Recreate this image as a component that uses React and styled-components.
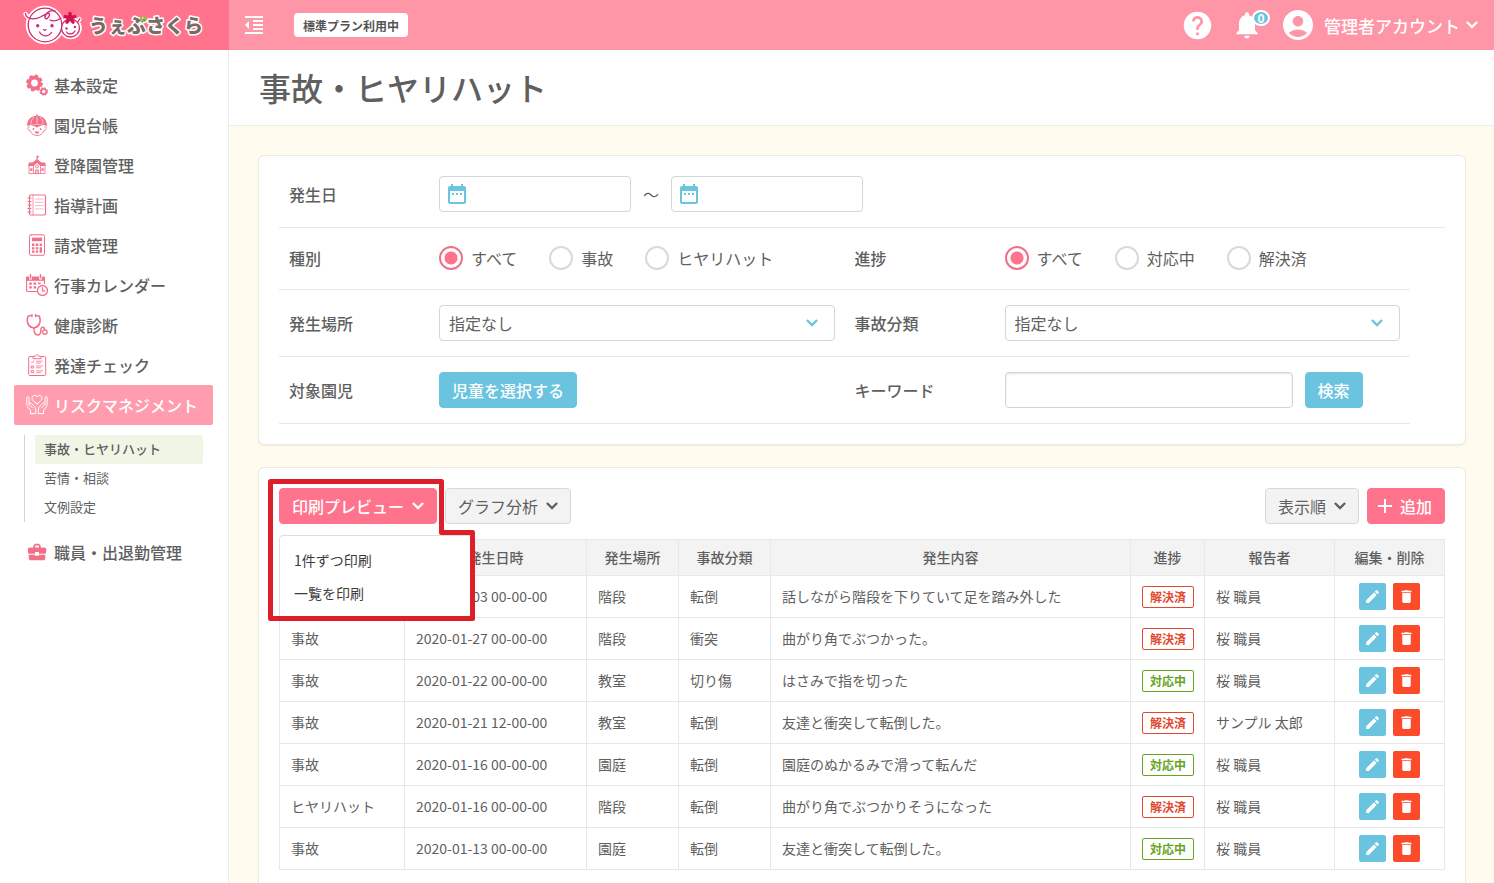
import React from 'react';
import styled, { createGlobalStyle, css } from 'styled-components';
import {
  MdHelp,
  MdNotifications,
  MdAccountCircle,
  MdFormatIndentDecrease,
  MdDateRange,
  MdEdit,
  MdDelete,
  MdAdd,
  MdBusinessCenter,
} from 'react-icons/md';

const color = {
  pink: '#ff738c',
  pinkLight: '#ff96a8',
  pinkActive: '#ff9dae',
  icon: '#f0708a',
  blue: '#6ac4df',
  red: '#fb4b2b',
  text: '#5f5f5f',
  line: '#e8e8e8',
  cream: '#fffbee',
};

const GlobalStyle = createGlobalStyle`
  *, *::before, *::after { box-sizing: border-box; }
  body {
    margin: 0;
    color: ${color.text};
    background: ${color.cream};
    font-family: "Noto Sans CJK JP", "Noto Sans", sans-serif;
    font-size: 16px;
    line-height: 24px;
  }
  button, input, select { font: inherit; color: inherit; margin: 0; }
  a { color: inherit; text-decoration: none; }
  ul { list-style: none; margin: 0; padding: 0; }
  svg { display: block; flex: none; }
`;

const Shell = styled.div`
  display: flex;
  height: 100vh;
`;

/* ---------- sidebar ---------- */

const Sidebar = styled.aside`
  flex: none;
  width: 229px;
  background: #fff;
  display: flex;
  flex-direction: column;
`;

const Brand = styled.a`
  height: 50px;
  padding-left: 22px;
  background: ${color.pink};
`;

const Nav = styled.nav`
  flex: 1;
  padding: 15px 15px 0 14px;
  border-right: 1px solid #ededed;
`;

const NavLink = styled.a`
  display: flex;
  align-items: center;
  gap: 6px;
  height: 40px;
  padding-left: 12px;
  border-radius: 2px;
  font-weight: 500;
  color: ${(p) => (p.$active ? '#fff' : color.text)};
  background: ${(p) => (p.$active ? color.pinkActive : 'transparent')};
  svg { color: ${(p) => (p.$active ? '#fff' : color.icon)}; }
`;

const SubMenu = styled.ul`
  margin: 10px;
  padding-left: 10px;
  border-left: 1px solid #d4d4d4;
`;

const SubLink = styled.a`
  display: block;
  height: 29px;
  padding-left: 9px;
  border-radius: 2px;
  font-size: 13px;
  line-height: 27px;
  font-weight: ${(p) => (p.$active ? 500 : 400)};
  background: ${(p) => (p.$active ? '#eff6e6' : 'transparent')};
`;

/* ---------- header ---------- */

const Main = styled.div`
  flex: 1;
  min-width: 0;
  display: flex;
  flex-direction: column;
`;

const TopBar = styled.header`
  flex: none;
  display: flex;
  align-items: center;
  justify-content: space-between;
  height: 50px;
  padding: 0 16px 0 13px;
  color: #fff;
  background: ${color.pinkLight};
`;

const TopGroup = styled.div`
  display: flex;
  align-items: center;
  gap: ${(p) => p.$gap}px;
`;

const PlainButton = styled.button`
  position: relative;
  display: flex;
  align-items: center;
  gap: 8px;
  padding: 0;
  border: 0;
  background: none;
  color: inherit;
  cursor: pointer;
`;

const AccountButton = styled(PlainButton)`
  gap: 6px;
  font-size: 17px;
  line-height: 26px;
  font-weight: 500;
`;

const AccountName = styled.span`
  padding: 2px 0 0 2px;
`;

const PlanTag = styled.span`
  height: 24px;
  padding: 1px 9px 0;
  border-radius: 4px;
  background: #fff;
  color: #555;
  font-size: 12px;
  font-weight: 700;
`;

const Count = styled.span`
  position: absolute;
  top: 1px;
  left: 21px;
  width: 18px;
  height: 16px;
  border: 2px solid #fff;
  border-radius: 50%;
  background: ${color.blue};
  font-size: 12px;
  font-weight: 700;
  line-height: 11px;
  text-align: center;
`;

const TitleBar = styled.div`
  flex: none;
  display: flex;
  align-items: center;
  height: 76px;
  padding: 0 30px 2px;
  background: #fff;
  border-bottom: 1px solid #ececec;
`;

const Title = styled.h1`
  margin: 0;
  font-size: 32px;
  line-height: 48px;
  font-weight: 500;
`;

const Content = styled.main`
  flex: 1;
  min-height: 0;
  overflow-y: auto;
  scrollbar-width: none;
  padding: 29px 28px 29px 29px;
`;

const Card = styled.section`
  padding: ${(p) => p.$top}px 20px 20px;
  border: 1px solid #ebe9e2;
  border-radius: 6px;
  background: #fff;
  box-shadow: 0 1px 2px rgba(0, 0, 0, 0.06);
  & + & { margin-top: 22px; }
`;

/* ---------- search form ---------- */

const FieldRow = styled.div`
  display: flex;
  width: ${(p) => (p.$full ? '100%' : '97%')};
  height: ${(p) => (p.$short ? 62 : 67)}px;
  padding-bottom: ${(p) => (p.$short ? 2 : 0)}px;
  border-bottom: 1px solid ${color.line};
`;

const Field = styled.div`
  flex: 1;
  display: flex;
  align-items: center;
  padding: 0 10px;
`;

const labelStyle = css`
  flex: none;
  width: 150px;
  font-weight: 500;
`;
const FieldLabel = styled.label`${labelStyle}`;
const FieldName = styled.span`${labelStyle}`;

const Controls = styled.div`
  flex: 1;
  display: flex;
  align-items: center;
  gap: ${(p) => p.$gap || 12}px;
`;

const boxStyle = css`
  height: 36px;
  border: 1px solid #d5d5d5;
  border-radius: 4px;
  background: #fff;
`;

const DateBox = styled.span`
  position: relative;
  svg {
    position: absolute;
    top: 6px;
    left: 6px;
    color: ${color.blue};
    pointer-events: none;
  }
`;

const DateInput = styled.input`
  ${boxStyle}
  display: block;
  width: 192px;
  padding: 0 8px 0 34px;
`;

const KeywordInput = styled.input`
  ${boxStyle}
  width: 288px;
  padding: 0 8px;
  box-shadow: inset 0 1px 2px rgba(0, 0, 0, 0.12);
`;

const SelectBox = styled.span`
  position: relative;
  flex: 1;
  svg {
    position: absolute;
    top: 14px;
    right: 17px;
    color: ${color.blue};
    pointer-events: none;
  }
`;

const Select = styled.select`
  ${boxStyle}
  display: block;
  width: 100%;
  padding: 0 9px;
  appearance: none;
`;

const RadioLabel = styled.label`
  display: flex;
  align-items: center;
  gap: 8px;
`;

const Radio = styled.input`
  appearance: none;
  width: 24px;
  height: 24px;
  border: 2px solid #d9d9d9;
  border-radius: 50%;
  background: #fff;
  &:checked {
    border-color: ${color.icon};
    background: radial-gradient(circle, ${color.pink} 6px, #fff 7px);
  }
`;

const tones = {
  blue: css`color: #fff; background: ${color.blue}; border-color: ${color.blue}; font-weight: 500;`,
  pink: css`color: #fff; background: ${color.pink}; border-color: ${color.pink}; font-weight: 500;`,
  gray: css`color: ${color.text}; background: #f3f3f3; border-color: #d8d8d8;`,
};

const Button = styled.button`
  display: inline-flex;
  align-items: center;
  gap: 8px;
  height: 36px;
  padding: 0 12px;
  border: 1px solid;
  border-radius: 4px;
  white-space: nowrap;
  cursor: pointer;
  ${(p) => tones[p.$tone]}
`;

const AddButton = styled(Button)`
  gap: 3px;
  padding: 0 12px 0 5px;
`;

/* ---------- list ---------- */

const Toolbar = styled.div`
  display: flex;
  justify-content: space-between;
  margin-bottom: 15px;
`;

const ToolGroup = styled.div`
  display: flex;
  gap: 8px;
`;

const MenuAnchor = styled.div`
  position: relative;
  z-index: 1;
`;

const Menu = styled.ul`
  && {
    position: absolute;
    top: 47px;
    left: 0;
    width: 194px;
    padding: 8px 0;
    border: 1px solid #dedede;
    border-radius: 4px;
    background: #fff;
  }
`;

const MenuItem = styled.button`
  display: block;
  width: 100%;
  height: 33px;
  padding: 0 14px 2px;
  border: 0;
  background: none;
  color: #3c3c3c;
  font-size: 14px;
  text-align: left;
  cursor: pointer;
`;

const Highlight = styled.svg`
  position: absolute;
  top: -9px;
  left: -11px;
  pointer-events: none;
`;

const Table = styled.table`
  width: 100%;
  table-layout: fixed;
  border-collapse: collapse;
  font-size: 14px;
  line-height: 20px;
`;

const Col = styled.col`
  width: ${(p) => (p.$w ? `${p.$w}px` : 'auto')};
`;

const Th = styled.th`
  height: 36px;
  padding: 0 0 2px;
  border: 1px solid ${color.line};
  background: #f3f3f3;
  font-weight: 500;
`;

const Td = styled.td`
  height: 42px;
  padding: ${(p) => (p.$control ? '0 11px' : '0 11px 2px')};
  border: 1px solid ${color.line};
  white-space: nowrap;
`;

const Status = styled.span`
  display: block;
  width: 52px;
  height: 22px;
  border: 1px solid;
  border-radius: 2px;
  color: ${(p) => (p.$done ? '#e2492f' : '#68a51e')};
  font-size: 12px;
  font-weight: 700;
  line-height: 20px;
  text-align: center;
`;

const Actions = styled.div`
  display: flex;
  justify-content: center;
  gap: 7px;
`;

const IconButton = styled.button`
  display: grid;
  place-items: center;
  width: 27px;
  height: 27px;
  padding: 0;
  border: 0;
  border-radius: 2px;
  color: #fff;
  background: ${(p) => p.$bg};
  cursor: pointer;
`;

/* ---------- drawings ---------- */

const Chevron = () => (
  <svg width="12" height="8" viewBox="0 0 12 8" fill="none" stroke="currentColor" strokeWidth="2.4" aria-hidden="true">
    <path d="M.9 1 6 6 11.100 1" />
  </svg>
);

const Glyph = ({ children }) => (
  <svg width="22" height="22" viewBox="0 0 22 22" fill="none" stroke="currentColor" strokeWidth="1" strokeLinecap="round" strokeLinejoin="round" aria-hidden="true">
    {children}
  </svg>
);

const Gears = () => (
  <Glyph>
    <circle cx="8.500" cy="9" r="5.300" strokeWidth="3.800" />
    <circle cx="8.500" cy="9" r="7.400" strokeWidth="2" strokeDasharray="3.600 2.210" strokeLinecap="butt" />
    <circle cx="17.700" cy="17.500" r="2.600" strokeWidth="1.800" />
    <circle cx="17.700" cy="17.500" r="3.700" strokeWidth="1.200" strokeDasharray="1.700 1.200" strokeLinecap="butt" />
  </Glyph>
);

const Child = () => (
  <Glyph>
    <path d="M1 12C1 5.800 5.200 1.800 11 1.800s10 4 10 10.200C18 10.800 14.600 10.400 11 10.400S4 10.800 1 12z" fill="currentColor" stroke="none" />
    <circle cx="11" cy="1.600" r="1" fill="currentColor" stroke="none" />
    <path d="M11 2.800V9.200M7.600 3.500C5.800 5.200 5 7.200 4.900 9.500M14.400 3.500C16.200 5.200 17 7.200 17.100 9.500" stroke="#fff" strokeWidth=".6" />
    <path d="M3.400 12.700c-2.200-.2-2.600 3.200.4 3.700C5 19.500 7.800 21.500 11 21.500s6-2 7.200-5.100c3-.5 2.600-3.900.4-3.700" strokeWidth=".9" />
    <path d="M5 11.500c4-1 8-1 12 0l-4.500.9-1.500 1.400-1.500-1.400z" fill="currentColor" stroke="none" />
    <circle cx="7.400" cy="15" r=".9" fill="currentColor" stroke="none" />
    <circle cx="14.600" cy="15" r=".9" fill="currentColor" stroke="none" />
    <path d="M8.600 17.500h4.800c-.4 1.700-1.300 2.200-2.400 2.200s-2-.5-2.400-2.200z" fill="currentColor" stroke="none" />
  </Glyph>
);

const School = () => (
  <Glyph>
    <path d="M11 7V2" />
    <path d="M11 1.500l2.600 1.200L11 4z" fill="currentColor" stroke="none" />
    <path d="M11 5 6.500 8.500H3L2 12h5.500L11 9.100l3.500 2.900H20l-1-3.500h-3.500z" fill="currentColor" stroke="none" />
    <path d="M3 12v7.500h16V12M7.500 12v7.500M14.500 12v7.500" strokeWidth=".8" />
    <circle cx="11" cy="12.500" r="1.500" strokeWidth=".9" />
    <path d="M4.300 14.500h2v2.200h-2zM15.700 14.500h2v2.200h-2z" fill="currentColor" strokeWidth=".3" />
    <path d="M9.500 19.500V16h3v3.500M11 16v3.500" strokeWidth=".8" />
  </Glyph>
);

const Notebook = () => (
  <Glyph>
    <rect x="3.500" y="1" width="16" height="20" rx="1.500" strokeWidth="1.200" />
    <path d="M7 1v20" strokeWidth=".7" />
    <path d="M2 4h3M2 7.500h3M2 11h3M2 14.500h3M2 18h3" strokeWidth="1.200" />
    <path d="M9.500 5h7.500M9.500 8.300h7.500M9.500 11.600h7.500M9.500 14.900h7.500" strokeWidth=".5" />
  </Glyph>
);

const Calculator = () => (
  <Glyph>
    <rect x="3.500" y=".8" width="15" height="20.500" rx="1.500" />
    <path d="M6 3.600h10v3.600H6z" fill="currentColor" stroke="none" />
    <path d="M6 9.600h2.400V12H6zM9.800 9.600h2.400V12H9.800zM13.600 9.600H16V12h-2.400zM6 13.200h2.400v2.300H6zM9.800 13.200h2.400v2.300H9.800zM13.600 13.200H16v5.500h-2.400zM6 16.600h2.400v2.100H6zM9.800 16.600h2.400v2.100H9.800z" fill="currentColor" stroke="none" />
  </Glyph>
);

const CalendarClock = () => (
  <Glyph>
    <path d="M10.500 17.500H1.800A1.200 1.200 0 0 1 .6 16.300V3.500h17.800v6" strokeWidth="1.100" />
    <path d="M.3 2.500h18.200v4.300H.3z" fill="currentColor" stroke="none" />
    <path d="M4.500.3v4M14.500.3v4" stroke="#fff" strokeWidth="3" />
    <path d="M4.500.8V4M14.500.8V4" strokeWidth="1.500" />
    <path d="M3.200 8.500h2.600v2.300H3.200zM7.600 8.500h2.600v2.300H7.600zM12 8.500h2.600v1.700H12zM3.200 12.300h2.600v2.300H3.200zM7.600 12.300h2.600v2.300H7.600z" fill="currentColor" stroke="none" />
    <circle cx="16.500" cy="16.500" r="5" fill="#fff" strokeWidth="1.300" />
    <path d="M16.500 13.600v3.200h2.400" strokeWidth="1.200" />
  </Glyph>
);

const Stethoscope = () => (
  <Glyph>
    <path d="M5.500 1.500 2.200 2C.4 6 1.200 12 6.200 13.600c1 .4 2 .4 3 0C14.200 12 15 6 13.200 2l-3.300-.5" strokeWidth="1.600" />
    <path d="M6 .5v2.200M9.500.5v2.200" strokeWidth="1.300" />
    <path d="M8 14c-.2 4.500 1.200 7 3.500 7s3.300-1.700 3.300-4 .5-3.800 2-3.800 1.700 1.500 1.900 2.600" strokeWidth="1.500" />
    <circle cx="18.900" cy="18" r="2.200" strokeWidth="1.300" />
  </Glyph>
);

const Clipboard = () => (
  <Glyph>
    <rect x="2.700" y="2.500" width="17" height="19" rx="1" />
    <path d="M7 4.300V2.300h2.500C9.800.3 12.400.3 12.700 2.300h2.500v2z" fill="#fff" />
    <path d="M5.500 8.200l.8.800 1.600-2M5.500 12h2.200v2H5.500zM5.500 16.600h2.200v2H5.500z" strokeWidth=".9" />
    <path d="M10.500 7.200h6M10.500 9h4M10.500 12h6M10.500 13.800h4M10.500 16.800h6M10.500 18.600h4" strokeWidth=".8" />
  </Glyph>
);

const HeartHands = () => (
  <Glyph>
    <path d="M11 9.800C7.500 7.600 6 5.800 6 3.900 6 1.200 9.700.4 11 3c1.300-2.600 5-1.800 5 .9 0 1.900-1.500 3.700-5 5.900z" />
    <path d="M4.500 19.600v-3L1.300 12.400C.8 11 .7 6 .7 3.500c0-1.300 2-1.300 2.100 0l.3 6.300M3.300 10.500l3.200 3.400M3.300 10.500c-.3-1.700 1.300-2 2.300-1l3 3c1 1.200 1.200 3 1.200 7.100H4.500" />
    <path d="M17.500 19.600v-3l3.200-4.200c.5-1.400.6-6.400.6-8.900 0-1.300-2-1.300-2.100 0l-.3 6.300M18.700 10.500l-3.200 3.400M18.700 10.500c.3-1.700-1.300-2-2.300-1l-3 3c-1 1.200-1.200 3-1.200 7.100h5.300" />
  </Glyph>
);

const Case = () => <MdBusinessCenter size={22} aria-hidden="true" />;

const Logo = () => (
  <svg width="190" height="50" viewBox="22 0 190 50" role="img" aria-label="うぇぶさくら">
    <g fill="none" strokeLinecap="round" strokeLinejoin="round">
      <g stroke="#fff" strokeWidth="4.500">
        <circle cx="45" cy="25" r="17" fill="#fff" />
        <circle cx="70.500" cy="28" r="9" fill="#fff" />
        <path d="M25.500 14c2 5 8 5 15 1M79.500 19l-2 3" />
      </g>
      <g stroke="#cf2a72" strokeWidth="1.300">
        <circle cx="70.500" cy="28" r="9" fill="#fff" />
        <circle cx="45" cy="25" r="16.800" fill="#fff" />
        <path d="M25.500 13.500c.5 6 9 6.500 15 3.500 6-3.200 9.500-5 9-2-.6 3-3.500 5-4.500 3 -.4-4 4-8.500 10-7M50 20c3 1.500 7 1 11-2" />
        <path d="M39.500 32c2.500 5 9 5 12 .5M66.500 32c2 3 6.500 2.500 8.500-1M80 18.500l-2.500 4" />
        <path d="M43.500 29.500c.6 1 2 1 2.600 0" />
      </g>
      <g fill="#cf2a72">
        <circle cx="37.700" cy="25.700" r="1.700" />
        <circle cx="52" cy="25.700" r="1.700" />
        <circle cx="66.500" cy="28.500" r="1.200" />
        <circle cx="75" cy="27" r="1.200" />
      </g>
      <path d="M70 18V13.500M70 18l4.600-1.400M70 18l3 4M70 18l-3 4M70 18l-4.600-1.400" stroke="#d3134f" strokeWidth="3.600" />
    </g>
    <text x="89" y="33" fontSize="19" fontWeight="900" fill="#7a6a66" stroke="#fff" strokeWidth="3" strokeLinejoin="round" paintOrder="stroke">
      うぇぶさくら
    </text>
    <path d="M141 18.500l1.500 2.600M144.300 17l1.500 2.600" stroke="#86c43c" strokeWidth="2.400" strokeLinecap="round" />
  </svg>
);

/* ---------- data ---------- */

const navTop = [
  ['基本設定', Gears],
  ['園児台帳', Child],
  ['登降園管理', School],
  ['指導計画', Notebook],
  ['請求管理', Calculator],
  ['行事カレンダー', CalendarClock],
  ['健康診断', Stethoscope],
  ['発達チェック', Clipboard],
  ['リスクマネジメント', HeartHands],
];

const columns = [
  ['', 125],
  ['発生日時', 182],
  ['発生場所', 92],
  ['事故分類', 92],
  ['発生内容', 0],
  ['進捗', 74],
  ['報告者', 130],
  ['編集・削除', 110],
];

const rows = [
  ['', '2020-02-03 00-00-00', '階段', '転倒', '話しながら階段を下りていて足を踏み外した', true, '桜 職員'],
  ['事故', '2020-01-27 00-00-00', '階段', '衝突', '曲がり角でぶつかった。', true, '桜 職員'],
  ['事故', '2020-01-22 00-00-00', '教室', '切り傷', 'はさみで指を切った', false, '桜 職員'],
  ['事故', '2020-01-21 12-00-00', '教室', '転倒', '友達と衝突して転倒した。', true, 'サンプル 太郎'],
  ['事故', '2020-01-16 00-00-00', '園庭', '転倒', '園庭のぬかるみで滑って転んだ', false, '桜 職員'],
  ['ヒヤリハット', '2020-01-16 00-00-00', '階段', '転倒', '曲がり角でぶつかりそうになった', true, '桜 職員'],
  ['事故', '2020-01-13 00-00-00', '園庭', '転倒', '友達と衝突して転倒した。', false, '桜 職員'],
];

const RadioField = ({ name, label, options }) => (
  <Field role="radiogroup" aria-label={label}>
    <FieldName>{label}</FieldName>
    <Controls $gap={32}>
      {options.map((o, i) => (
        <RadioLabel key={o}>
          <Radio type="radio" name={name} defaultChecked={i === 0} />
          {o}
        </RadioLabel>
      ))}
    </Controls>
  </Field>
);

const SelectField = ({ id, label }) => (
  <Field>
    <FieldLabel htmlFor={id}>{label}</FieldLabel>
    <Controls>
      <SelectBox>
        <Select id={id}>
          <option>指定なし</option>
        </Select>
        <Chevron />
      </SelectBox>
    </Controls>
  </Field>
);

export default function App() {
  return (
    <Shell>
      <GlobalStyle />
      <Sidebar>
        <Brand href="#">
          <Logo />
        </Brand>
        <Nav>
          {navTop.map(([label, Icon], i) => (
            <NavLink key={label} href="#" $active={i === navTop.length - 1}>
              <Icon />
              {label}
            </NavLink>
          ))}
          <SubMenu>
            <li><SubLink href="#" $active>事故・ヒヤリハット</SubLink></li>
            <li><SubLink href="#">苦情・相談</SubLink></li>
            <li><SubLink href="#">文例設定</SubLink></li>
          </SubMenu>
          <NavLink href="#">
            <Case />
            職員・出退勤管理
          </NavLink>
        </Nav>
      </Sidebar>

      <Main>
        <TopBar>
          <TopGroup $gap={28}>
            <PlainButton aria-label="メニューを閉じる"><MdFormatIndentDecrease size={24} /></PlainButton>
            <PlanTag>標準プラン利用中</PlanTag>
          </TopGroup>
          <TopGroup $gap={17}>
            <PlainButton aria-label="ヘルプ"><MdHelp size={33} /></PlainButton>
            <PlainButton aria-label="お知らせ">
              <MdNotifications size={32} />
              <Count>0</Count>
            </PlainButton>
            <AccountButton>
              <MdAccountCircle size={36} />
              <AccountName>管理者アカウント</AccountName>
              <Chevron />
            </AccountButton>
          </TopGroup>
        </TopBar>

        <TitleBar>
          <Title>事故・ヒヤリハット</Title>
        </TitleBar>

        <Content>
          <Card as="form" $top={5} onSubmit={(e) => e.preventDefault()}>
            <FieldRow $full>
              <Field>
                <FieldLabel htmlFor="date-from">発生日</FieldLabel>
                <Controls>
                  <DateBox>
                    <DateInput id="date-from" type="text" />
                    <MdDateRange size={24} />
                  </DateBox>
                  <span>～</span>
                  <DateBox>
                    <DateInput type="text" aria-label="発生日（終了）" />
                    <MdDateRange size={24} />
                  </DateBox>
                </Controls>
              </Field>
            </FieldRow>
            <FieldRow $short>
              <RadioField name="kind" label="種別" options={['すべて', '事故', 'ヒヤリハット']} />
              <RadioField name="progress" label="進捗" options={['すべて', '対応中', '解決済']} />
            </FieldRow>
            <FieldRow>
              <SelectField id="place" label="発生場所" />
              <SelectField id="category" label="事故分類" />
            </FieldRow>
            <FieldRow>
              <Field>
                <FieldName>対象園児</FieldName>
                <Controls>
                  <Button type="button" $tone="blue">児童を選択する</Button>
                </Controls>
              </Field>
              <Field>
                <FieldLabel htmlFor="keyword">キーワード</FieldLabel>
                <Controls>
                  <KeywordInput id="keyword" type="text" />
                  <Button type="submit" $tone="blue">検索</Button>
                </Controls>
              </Field>
            </FieldRow>
          </Card>

          <Card $top={20}>
            <Toolbar>
              <ToolGroup>
                <MenuAnchor>
                  <Button $tone="pink" aria-haspopup="menu" aria-expanded="true">
                    印刷プレビュー
                    <Chevron />
                  </Button>
                  <Menu>
                    <li><MenuItem>1件ずつ印刷</MenuItem></li>
                    <li><MenuItem>一覧を印刷</MenuItem></li>
                  </Menu>
                  <Highlight width="207" height="142" viewBox="0 0 207 142" fill="none" stroke="#dc1f28" strokeWidth="5" strokeLinejoin="round" aria-hidden="true">
                    <path d="M2.500 2.500H173.500V53.500H204.500V139.500H2.500z" />
                  </Highlight>
                </MenuAnchor>
                <Button $tone="gray">
                  グラフ分析
                  <Chevron />
                </Button>
              </ToolGroup>
              <ToolGroup>
                <Button $tone="gray">
                  表示順
                  <Chevron />
                </Button>
                <AddButton $tone="pink">
                  <MdAdd size={24} />
                  追加
                </AddButton>
              </ToolGroup>
            </Toolbar>

            <Table>
              <colgroup>
                {columns.map(([label, w]) => <Col key={label} $w={w} />)}
              </colgroup>
              <thead>
                <tr>
                  {columns.map(([label]) => <Th key={label} scope="col">{label}</Th>)}
                </tr>
              </thead>
              <tbody>
                {rows.map(([kind, date, place, category, detail, done, reporter]) => (
                  <tr key={date + kind}>
                    <Td>{kind}</Td>
                    <Td>{date}</Td>
                    <Td>{place}</Td>
                    <Td>{category}</Td>
                    <Td>{detail}</Td>
                    <Td $control><Status $done={done}>{done ? '解決済' : '対応中'}</Status></Td>
                    <Td>{reporter}</Td>
                    <Td $control>
                      <Actions>
                        <IconButton $bg={color.blue} aria-label="編集"><MdEdit size={17} /></IconButton>
                        <IconButton $bg={color.red} aria-label="削除"><MdDelete size={17} /></IconButton>
                      </Actions>
                    </Td>
                  </tr>
                ))}
              </tbody>
            </Table>
          </Card>
        </Content>
      </Main>
    </Shell>
  );
}
